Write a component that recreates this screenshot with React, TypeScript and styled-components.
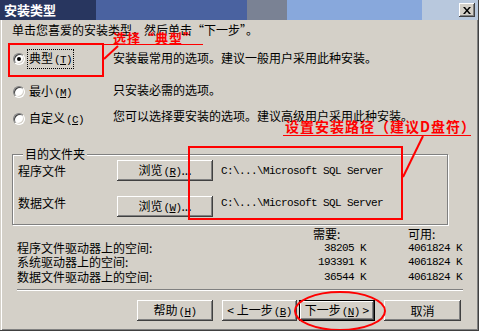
import React from 'react'
import styled, { createGlobalStyle } from 'styled-components'

const face = '#d4d0c8'
const shadow = '#808080'
const darkShadow = '#404040'
const red = '#ff0000'

const GlobalStyle = createGlobalStyle`
  html, body {
    margin: 0;
    padding: 0;
    background: ${face};
  }
  body {
    font-family: "Noto Sans CJK SC", "Noto Sans", sans-serif;
    font-size: 12px;
    color: #000;
  }
  * {
    box-sizing: border-box;
  }
`

const Window = styled.div`
  position: relative;
  width: 479px;
  height: 331px;
  background: ${face};
  border-right: 1px solid ${darkShadow};
  border-bottom: 1px solid ${darkShadow};
  box-shadow: inset -1px -1px 0 ${shadow};
  display: flex;
  flex-direction: column;
  overflow: hidden;
`

const TitleBar = styled.div`
  flex: none;
  height: 20px;
  display: flex;
  align-items: center;
  justify-content: space-between;
  padding: 0 3px 0 4px;
  background: linear-gradient(
    to right,
    #28365f 0 96px,
    #4a62a0 96px 247px,
    #7a8294 247px 287px,
    #88a8dc 287px 422px,
    #b8c8dd 422px
  );
`

const Title = styled.span`
  color: #fff;
  font-weight: bold;
  font-size: 13px;
  line-height: 20px;
`

const CloseButton = styled.button`
  width: 16px;
  height: 14px;
  padding: 0;
  border: none;
  background: ${face};
  box-shadow: inset -1px -1px 0 ${darkShadow}, inset 1px 1px 0 #fff,
    inset -2px -2px 0 ${shadow};
  display: flex;
  align-items: center;
  justify-content: center;
`

const Body = styled.div`
  flex: 1;
  display: flex;
  flex-direction: column;
  box-shadow: inset 1px 0 0 ${face}, inset 2px 0 0 #fff;
`

const Intro = styled.div`
  padding: 3px 0 0 12px;
  line-height: 14px;
  white-space: nowrap;
  font-feature-settings: "fwid";
`

const Options = styled.div`
  display: flex;
  flex-direction: column;
  padding-left: 13px;
`

const OptionRow = styled.div<{ $top: number }>`
  display: grid;
  grid-template-columns: 100px 1fr;
  align-items: center;
  height: 20px;
  margin-top: ${({ $top }) => $top}px;
`

const Choice = styled.label`
  display: flex;
  align-items: center;
  gap: 2px;
`

const Radio = styled.span<{ $checked?: boolean }>`
  width: 12px;
  height: 12px;
  border-radius: 50%;
  border: 1px solid;
  border-color: ${shadow} #fff #fff ${shadow};
  background: #fff;
  box-shadow: inset 1px 1px 0 ${darkShadow}, inset -1px -1px 0 ${face};
  display: flex;
  align-items: center;
  justify-content: center;

  &::after {
    content: '';
    width: 4px;
    height: 4px;
    border-radius: 50%;
    background: ${({ $checked }) => ($checked ? '#000' : 'transparent')};
  }
`

const ChoiceText = styled.span<{ $focused?: boolean }>`
  border: 1px ${({ $focused }) => ($focused ? 'dotted #000' : 'solid transparent')};
  padding: 1px;
  line-height: 14px;
  white-space: nowrap;
`

const Desc = styled.span<{ $lift: number }>`
  line-height: 12px;
  white-space: nowrap;
  margin-bottom: ${({ $lift }) => $lift * 2}px;
`

const Key = styled.span`
  font-family: "Liberation Mono", monospace;
  font-size: 11px;
  letter-spacing: -0.6px;
  padding-left: 1px;

  u {
    text-underline-offset: 1px;
  }
`

const GroupBox = styled.fieldset`
  margin: 19px 0 0 12px;
  width: 436px;
  min-width: 0;
  padding: 0 5px 7px 5px;
  border: 1px solid ${shadow};
  box-shadow: inset 1px 1px 0 #fff, 1px 1px 0 #fff;
`

const GroupLabel = styled.legend`
  margin-left: 5px;
  padding: 0 2px;
  line-height: 12px;
  background: ${face};
`

const FolderRow = styled.div<{ $top?: number; $align?: string }>`
  display: grid;
  grid-template-columns: 99px 96px 1fr;
  align-items: ${({ $align }) => $align ?? 'center'};
  height: 21px;
  margin-top: ${({ $top }) => $top ?? 0}px;
  line-height: 14px;
`

const Mono = styled.span`
  font-family: "Liberation Mono", monospace;
  font-size: 11px;
  letter-spacing: -0.6px;
  white-space: nowrap;
`

const FolderPath = styled(Mono)`
  margin-left: 8px;
`

const Button = styled.button<{ $width: number; $gap?: number; $default?: boolean }>`
  width: ${({ $width }) => $width}px;
  height: 21px;
  margin-left: ${({ $gap }) => $gap ?? 0}px;
  padding: 0;
  font: inherit;
  line-height: 14px;
  color: #000;
  white-space: nowrap;
  background: ${face};
  border: ${({ $default }) => ($default ? '1px solid #000' : 'none')};
  box-shadow: inset -1px -1px 0 ${darkShadow}, inset 1px 1px 0 #fff,
    inset -2px -2px 0 ${shadow};
`

const SpaceTable = styled.div`
  display: grid;
  grid-template-columns: 279px 70px 97px;
  grid-template-rows: 14px 14px 14px 16px;
  line-height: 12px;
  align-items: center;
  margin: 2px 0 0 17px;
`

const Cell = styled.span<{ $indent?: number }>`
  white-space: nowrap;
  padding-left: ${({ $indent }) => $indent ?? 0}px;
`

const NumCell = styled(Mono)<{ $right?: boolean; $indent?: number }>`
  text-align: ${({ $right }) => ($right ? 'right' : 'left')};
  padding-left: ${({ $indent }) => $indent ?? 0}px;
`

const Separator = styled.div`
  margin: 4px 15px 0 17px;
  border-top: 1px solid ${shadow};
  border-bottom: 1px solid #fff;
`

const ButtonBar = styled.div`
  display: flex;
  margin: 9px 0 0 137px;
`

const Markup = styled.svg`
  position: absolute;
  top: 0;
  left: 0;
  pointer-events: none;
`

const Note = styled.span<{ $x: number; $y: number; $size: number; $wide?: boolean }>`
  position: absolute;
  left: ${({ $x }) => $x}px;
  top: ${({ $y }) => $y}px;
  color: ${red};
  font-weight: bold;
  font-size: ${({ $size }) => $size}px;
  font-feature-settings: ${({ $wide }) => ($wide ? '"fwid"' : 'normal')};
  letter-spacing: 1px;
  line-height: 12px;
  white-space: nowrap;
`

const options = [
  { label: '典型', key: 'T', desc: '安装最常用的选项。建议一般用户采用此种安装。', top: 12, lift: 1, checked: true },
  { label: '最小', key: 'M', desc: '只安装必需的选项。', top: 13, lift: 2, checked: false },
  { label: '自定义', key: 'C', desc: '您可以选择要安装的选项。建议高级用户采用此种安装。', top: 7, lift: 3, checked: false },
]

const space = [
  { label: '程序文件驱动器上的空间:', need: '38205 K', free: '4061824 K' },
  { label: '系统驱动器上的空间:', need: '193391 K', free: '4061824 K' },
  { label: '数据文件驱动器上的空间:', need: '36544 K', free: '4061824 K' },
]

const Mnemonic = ({ k }: { k: string }) => (
  <Key>
    (<u>{k}</u>)
  </Key>
)

const App = () => {
  return (
    <Window lang="zh-CN">
      <GlobalStyle />
      <TitleBar>
        <Title>安装类型</Title>
        <CloseButton aria-label="关闭">
          <svg width="8" height="7" viewBox="0 0 8 7">
            <path d="M0 0h2l2 2.4L6 0h2L5 3.5 8 7H6L4 4.6 2 7H0l3-3.5z" fill="#000" />
          </svg>
        </CloseButton>
      </TitleBar>
      <Body>
        <Intro>单击您喜爱的安装类型，然后单击“下一步”。</Intro>
        <Options>
          {options.map((o) => (
            <OptionRow key={o.key} $top={o.top}>
              <Choice>
                <Radio $checked={o.checked} />
                <ChoiceText $focused={o.checked}>
                  {o.label}
                  <Mnemonic k={o.key} />
                </ChoiceText>
              </Choice>
              <Desc $lift={o.lift}>{o.desc}</Desc>
            </OptionRow>
          ))}
        </Options>
        <GroupBox>
          <GroupLabel>目的文件夹</GroupLabel>
          <FolderRow>
            <span>程序文件</span>
            <Button $width={96}>
              浏览<Mnemonic k="R" />...
            </Button>
            <FolderPath>C:\...\Microsoft SQL Server</FolderPath>
          </FolderRow>
          <FolderRow $top={15} $align="start">
            <span>数据文件</span>
            <Button $width={96}>
              浏览<Mnemonic k="W" />...
            </Button>
            <FolderPath>C:\...\Microsoft SQL Server</FolderPath>
          </FolderRow>
        </GroupBox>
        <SpaceTable>
          <Cell />
          <Cell $indent={17}>需要:</Cell>
          <Cell $indent={42}>可用:</Cell>
          {space.map((s) => (
            <React.Fragment key={s.label}>
              <Cell>{s.label}</Cell>
              <NumCell $right>{s.need}</NumCell>
              <NumCell $indent={42}>{s.free}</NumCell>
            </React.Fragment>
          ))}
        </SpaceTable>
        <Separator />
        <ButtonBar>
          <Button $width={76}>
            帮助<Mnemonic k="H" />
          </Button>
          <Button $width={75} $gap={9}>
            &lt; 上一步<Mnemonic k="B" />
          </Button>
          <Button $width={76} $gap={2} $default>
            下一步<Mnemonic k="N" /> &gt;
          </Button>
          <Button $width={77} $gap={9}>
            取消
          </Button>
        </ButtonBar>
      </Body>

      <Markup width="479" height="331" viewBox="0 0 479 331">
        <g fill="none" stroke={red}>
          <rect x="9" y="44" width="94" height="32" strokeWidth="2" />
          <line x1="104" y1="59" x2="118" y2="46" strokeWidth="2" />
          <line x1="104" y1="44.5" x2="203" y2="44.5" strokeWidth="1" />
          <rect x="189" y="147" width="213" height="72" strokeWidth="2" />
          <line x1="423" y1="136" x2="403" y2="177" strokeWidth="2" />
          <line x1="283" y1="135.5" x2="471" y2="135.5" strokeWidth="1" />
          <ellipse cx="340" cy="311" rx="45" ry="19" strokeWidth="2" />
        </g>
      </Markup>
      <Note $x={113} $y={32} $size={13} $wide>
        选择“典型”
      </Note>
      <Note $x={285} $y={120} $size={14}>
        设置安装路径（建议D盘符）
      </Note>
    </Window>
  )
}

export default App
